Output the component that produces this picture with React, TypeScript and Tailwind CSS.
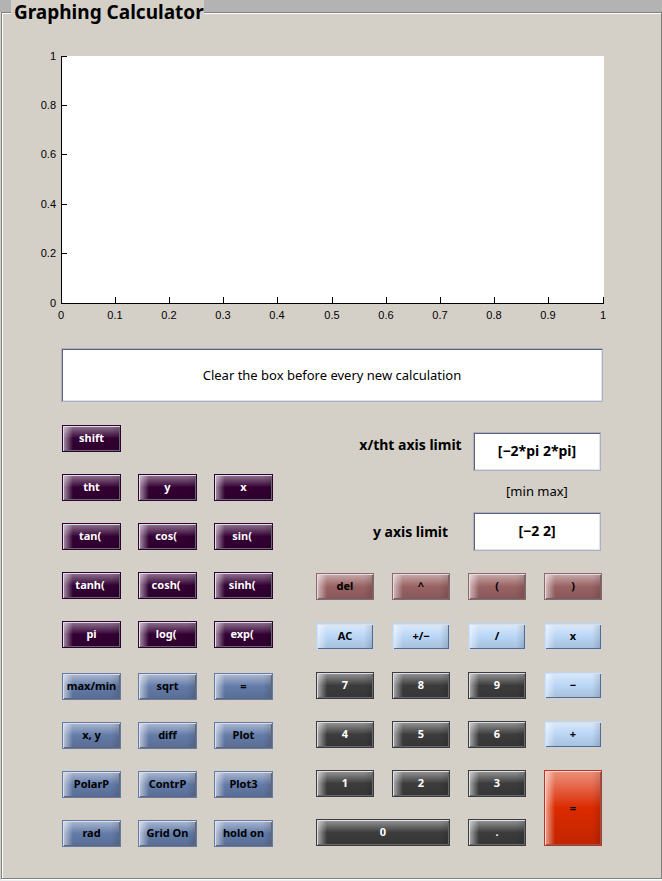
import { useState } from "react";

type Tone = "purple" | "blue" | "mauve" | "sky" | "dark" | "red";

const tones: Record<Tone, string> = {
  purple: "bg-[#330033] border-[#330033] text-white",
  blue: "bg-[#637ba8] border-[#637ba8] text-black",
  mauve: "bg-[#996263] border-[#996263] text-black",
  sky: "bg-[#bad6f6] border-[#bad6f6] text-black",
  dark: "bg-[#3c3c3c] border-[#3c3c3c] text-white",
  red: "bg-[#db2a00] border-[#db2a00] text-black",
};

const bevel =
  "bg-[linear-gradient(to_right,rgba(255,255,255,0.65),rgba(255,255,255,0)_11px),linear-gradient(to_left,rgba(0,0,0,0.15),rgba(0,0,0,0)_10px),linear-gradient(to_bottom,rgba(255,255,255,0.5),rgba(255,255,255,0)_50%,rgba(0,0,0,0.12))] shadow-[inset_1px_1px_0_#dddde8,inset_-1px_-1px_0_#666673]";

function Key({ label, tone, span = "" }: { label: string; tone: Tone; span?: string }) {
  return (
    <button
      type="button"
      className={`flex min-h-[27px] min-w-0 items-center justify-center overflow-hidden whitespace-pre border bg-origin-border pb-px text-[11px] font-bold leading-4 ${tones[tone]} ${bevel} ${span}`}
    >
      {label}
    </button>
  );
}

const purpleKeys = ["tht", "y", "x", "tan( ", "cos( ", "sin( ", "tanh( ", "cosh( ", "sinh( ", "pi", "log( ", "exp( "];
const blueKeys = ["max/min", "sqrt", "=", "x, y", "diff", "Plot", "PolarP", "ContrP", "Plot3", "rad", "Grid On", "hold on"];

const functionKeys: [string, Tone][] = [
  ["del", "mauve"], ["^", "mauve"], ["(", "mauve"], [")", "mauve"],
  ["AC", "sky"], ["+/−", "sky"], ["/", "sky"], ["x", "sky"],
];

const numberKeys: [string, Tone, string?][] = [
  ["7", "dark"], ["8", "dark"], ["9", "dark"], ["−", "sky"],
  ["4", "dark"], ["5", "dark"], ["6", "dark"], ["+", "sky"],
  ["1", "dark"], ["2", "dark"], ["3", "dark"], ["=", "red", "row-span-2"],
  ["0", "dark", "col-span-2"], [".", "dark"],
];

const field =
  "border border-[#abb0c3] bg-white text-center text-black shadow-[inset_1px_1px_0_#5f6378,inset_-1px_-1px_0_#dfe3ef] outline-none";

function Axes() {
  const xTicks = Array.from({ length: 11 }, (_, i) => i);
  const yTicks = Array.from({ length: 6 }, (_, i) => i);
  return (
    <svg
      viewBox="0 0 568 272"
      className="block w-full font-['Liberation_Sans',Arial,sans-serif] text-[11px]"
      role="img"
      aria-label="Plot area"
    >
      <rect x="23" y="6" width="543" height="248" fill="#fff" />
      <g stroke="#000" strokeWidth="1" shapeRendering="crispEdges" fill="none">
        <path d="M23.5 6V253.5H566" />
        {xTicks.map((i) => {
          const x = Math.floor(23 + i * 54.2) + 0.5;
          return <path key={i} d={`M${x} 253V247`} />;
        })}
        {yTicks.map((i) => {
          const y = Math.floor(253 - i * 49.4) + 0.5;
          return <path key={i} d={`M23 ${y}H29`} />;
        })}
      </g>
      {xTicks.map((i) => (
        <text key={i} x={Math.round(22.5 + i * 54.2)} y="269" textAnchor="middle">
          {i / 10}
        </text>
      ))}
      {yTicks.map((i) => (
        <text key={i} x="18" y={Math.floor(253 - i * 49.4) + 4} textAnchor="end">
          {i / 5}
        </text>
      ))}
    </svg>
  );
}

export default function App() {
  const [expression, setExpression] = useState("Clear the box before every new calculation");
  const [xLimit, setXLimit] = useState("[−2*pi 2*pi]");
  const [yLimit, setYLimit] = useState("[−2 2]");

  return (
    <main className="border-b border-[#eeeeee] bg-[linear-gradient(#b3b3b3_12px,#d4d0c8_12px)] pb-px pl-px font-['Noto_Sans','Open_Sans',sans-serif] text-black">
      <fieldset className="min-w-0 border border-[#808080] bg-[#d4d0c8] pb-[31px] pl-9 pr-[55px] shadow-[inset_1px_1px_0_#fff,0_1px_0_#fff]">
        <legend className="-ml-[27px] bg-[#d4d0c8] pl-[3px] text-[19px] font-bold leading-6">
          Graphing Calculator
        </legend>
        <div className="pt-[26px]">
          <Axes />
        </div>
        <div className="pl-[23px] pr-[3px] pt-[26px]">
          <input
            aria-label="Expression"
            value={expression}
            onChange={(e) => setExpression(e.target.value)}
            className={`block h-[54px] w-full text-[13px] ${field}`}
          />
          <div className="mt-[23px] grid grid-cols-[211fr_286fr] gap-x-[43px] px-px">
            <section aria-label="Functions" className="grid content-start gap-y-[25px]">
              <div className="grid grid-cols-3 gap-x-[17px] gap-y-[22px]">
                <Key label="shift" tone="purple" span="col-start-1" />
                {purpleKeys.map((k, i) => (
                  <Key key={k} label={k} tone="purple" span={i === 0 ? "col-start-1" : ""} />
                ))}
              </div>
              <div className="grid grid-cols-3 gap-x-[17px] gap-y-[22px]">
                {blueKeys.map((k) => (
                  <Key key={k} label={k} tone="blue" />
                ))}
              </div>
            </section>
            <section aria-label="Limits and keypad" className="pt-[7px]">
              <div className="grid grid-cols-[1fr_128px] items-center gap-x-2 pl-10 pr-px">
                <label htmlFor="x-limit" className="self-start pt-1 text-center text-[14px] font-bold leading-[18px]">
                  x/tht axis limit
                </label>
                <input
                  id="x-limit"
                  value={xLimit}
                  onChange={(e) => setXLimit(e.target.value)}
                  className={`h-[39px] w-full pb-0.5 text-[14px] font-bold ${field}`}
                />
                <p className="col-start-2 pb-3 pt-[11px] text-center text-[13px] leading-[18px]">[min max]</p>
                <label htmlFor="y-limit" className="col-start-1 text-center text-[14px] font-bold leading-[18px]">
                  y axis limit
                </label>
                <input
                  id="y-limit"
                  value={yLimit}
                  onChange={(e) => setYLimit(e.target.value)}
                  className={`h-[39px] w-full pb-0.5 text-[14px] font-bold ${field}`}
                />
              </div>
              <div className="mt-[22px] grid grid-cols-4 gap-x-[18px] gap-y-[23px]">
                {functionKeys.map(([k, tone]) => (
                  <Key key={k} label={k} tone={tone} />
                ))}
              </div>
              <div className="mt-[22px] grid grid-cols-4 gap-x-[18px] gap-y-[22px]">
                {numberKeys.map(([k, tone, span]) => (
                  <Key key={k} label={k} tone={tone} span={span} />
                ))}
              </div>
            </section>
          </div>
        </div>
      </fieldset>
    </main>
  );
}
